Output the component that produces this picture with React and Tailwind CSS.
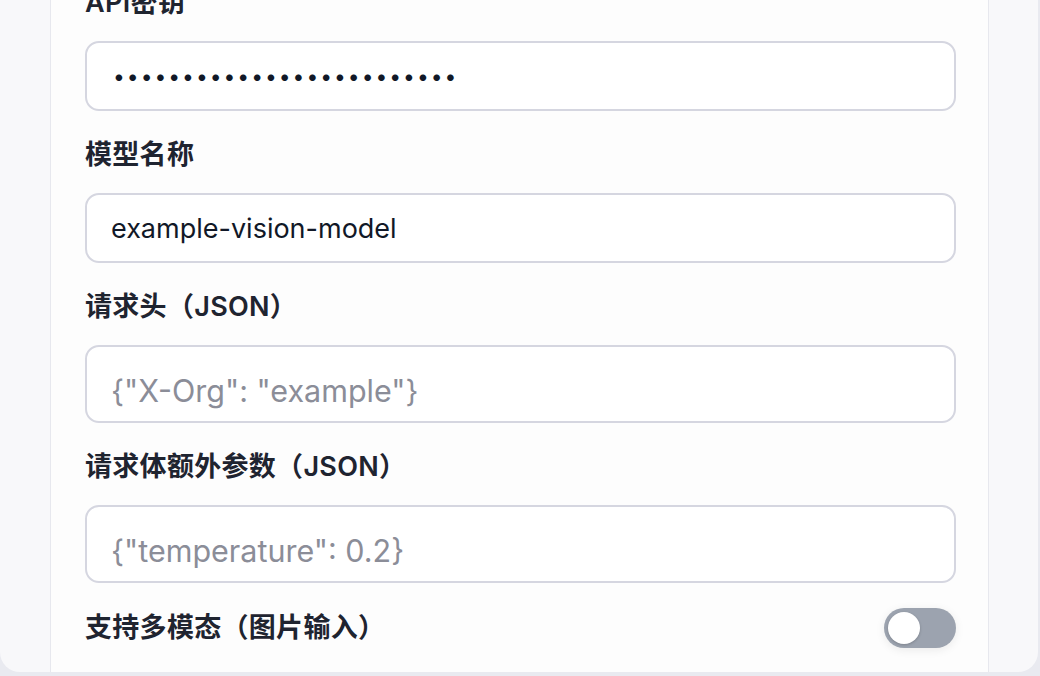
import React from "react";

const font = { fontFamily: '"Inter", "Noto Sans CJK SC", sans-serif' };

function Label({ children }) {
  return (
    <div className="h-[36px] leading-[36px] text-[27px] font-semibold text-[#1f2430] tracking-[0.3px]">
      {children}
    </div>
  );
}

export default function App() {
  return (
    <div className="w-[1040px] h-[676px] bg-[#e9eaf0] overflow-hidden" style={font}>
      <div className="flex w-[1038px] h-[672px] bg-[#f8f8fa] rounded-b-[20px] overflow-hidden pl-[50px] pr-[49px]">
        <div className="flex flex-1 flex-col bg-[#fdfdfd] border-x border-[#e7e8ee] pl-[34px] pr-[32px]">
          <div className="-mt-[15px] flex flex-col">
            <Label>API密钥</Label>
            <input
              type="password"
              defaultValue="aaaaaaaaaaaaaaaaaaaaaaaaa"
              className="mt-[20px] h-[70px] w-full rounded-[14px] border-2 border-[#d5d6e0] bg-white px-[26px] text-[21px] text-[#111827] outline-none tracking-[2px]"
              style={font}
            />
            <div className="mt-[26px]">
              <Label>模型名称</Label>
            </div>
            <input
              type="text"
              defaultValue="example-vision-model"
              className="mt-[20px] h-[70px] w-full rounded-[14px] border-2 border-[#d5d6e0] bg-white px-[24px] text-[27px] text-[#111827] outline-none"
              style={font}
            />
            <div className="mt-[26px]">
              <Label>请求头（JSON）</Label>
            </div>
            <textarea
              placeholder={'{"X-Org": "example"}'}
              className="mt-[20px] h-[78px] w-full resize-none rounded-[14px] border-2 border-[#d5d6e0] bg-white px-[24px] pt-[26px] text-[30.5px] leading-[36px] text-[#111827] placeholder:text-[#8b8d98] outline-none"
              style={font}
            />
            <div className="mt-[26px]">
              <Label>请求体额外参数（JSON）</Label>
            </div>
            <textarea
              placeholder={'{"temperature": 0.2}'}
              className="mt-[20px] h-[78px] w-full resize-none rounded-[14px] border-2 border-[#d5d6e0] bg-white px-[24px] pt-[26px] text-[30.5px] leading-[36px] text-[#111827] placeholder:text-[#8b8d98] outline-none"
              style={font}
            />
            <div className="mt-[25px] flex items-center justify-between h-[40px]">
              <Label>支持多模态（图片输入）</Label>
              <div className="relative h-[40px] w-[72px] rounded-full bg-[#9ca3af] shadow-[0_2px_10px_rgba(0,0,0,0.08)]">
                <div className="absolute left-[4px] top-[4px] h-[32px] w-[32px] rounded-full bg-white shadow-[0_1px_3px_rgba(0,0,0,0.2)]" />
              </div>
            </div>
          </div>
        </div>
      </div>
    </div>
  );
}
